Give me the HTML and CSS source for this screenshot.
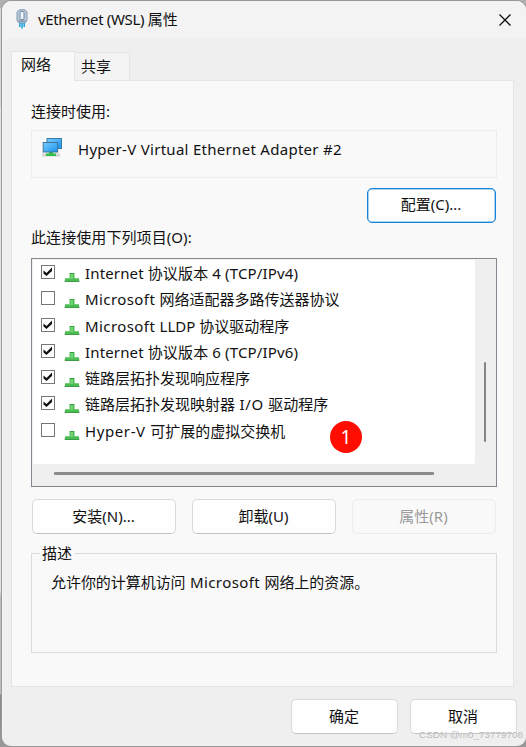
FILE: index.html
```html
<!DOCTYPE html>
<html lang="zh-CN">
<head>
<meta charset="utf-8">
<title>vEthernet (WSL) 属性</title>
<link rel="stylesheet" href="styles.css">
</head>
<body>
<svg class="defs" aria-hidden="true">
  <symbol id="proto" viewBox="0 0 16 12">
    <rect x="0" y="8" width="16" height="2" fill="#d5d5d5"/>
    <path d="M5.500 1h5v5.200H15V10H1V6.200h4.500z" fill="#4cbd52"/>
    <path d="M6 1h4v1H6zM1 9h14v1H1z" fill="#3a9c45"/>
    <path d="M6.500 2h2.500v5H3v-.5h3.500z" fill="#72d374"/>
  </symbol>
  <symbol id="tick" viewBox="0 0 12 12">
    <path d="M1.500 4.500l3 2.500L10 1.500V5L4.500 10l-3-2.500z" fill="#111"/>
  </symbol>
</svg>
<main class="dialog">
  <header class="titlebar">
    <svg class="plug" viewBox="0 0 12 20">
      <path d="M3 .8h6l2 2.200v8.500L9 14H3l-2-2.500V3z" fill="#b9c9da" stroke="#8399b1"/>
      <rect x="4" y="2.500" width="4" height="8" rx="1" fill="#eef5fb" stroke="#7187a0"/>
      <path d="M2.500 12h7" stroke="#667f9b"/>
      <path d="M3.800 14v4M6 14v5.500M8.200 14v4" stroke="#19a3dc" stroke-width="1.500"/>
    </svg>
    <h1 class="title"><span class="t-title">vEthernet (WSL) </span>属性</h1>
    <svg class="close" viewBox="0 0 12 12"><path d="M.5.5l11 11M11.500.5l-11 11" stroke="#111" stroke-width="1.250"/></svg>
  </header>
  <nav class="tabs">
    <div class="tab active">网络</div>
    <div class="tab">共享</div>
  </nav>
  <section class="panel">
    <div class="label">连接时使用:</div>
    <div class="device">
      <svg class="monitors" viewBox="0 0 20 20">
        <defs><linearGradient id="g" x1="0" y1="0" x2="1" y2="1"><stop offset="0" stop-color="#7ccbff"/><stop offset="1" stop-color="#1594ee"/></linearGradient></defs>
        <rect x="5" y="1.500" width="14.500" height="10" fill="url(#g)" stroke="#3a7ca8"/>
        <rect x="0" y="16.500" width="18" height="3" fill="#d4d4d4"/>
        <path d="M7 14h4v2.500h3V19H4v-2.500h3z" fill="#35bd4d"/>
        <rect x="1.200" y="5.500" width="14.500" height="9.500" fill="url(#g)" stroke="#3f7597"/>
      </svg>
      <span class="t-device">Hyper-V Virtual Ethernet Adapter #2</span>
    </div>
    <div class="config-row"><button class="btn primary">配置(C)...</button></div>
    <div class="label list-label">此连接使用下列项目(O):</div>
    <div class="listbox">
      <ul class="items">
        <li><i class="check"><svg><use href="#tick"/></svg></i><svg class="proto"><use href="#proto"/></svg><span class="loose-1">Internet 协议版本 4 (TCP/IPv4)</span></li>
        <li><i class="check"></i><svg class="proto"><use href="#proto"/></svg><span><b class="loose-2">Microsoft </b>网络适配器多路传送器协议</span></li>
        <li><i class="check"><svg><use href="#tick"/></svg></i><svg class="proto"><use href="#proto"/></svg><span><b class="loose-2">Microsoft </b>LLDP 协议驱动程序</span></li>
        <li><i class="check"><svg><use href="#tick"/></svg></i><svg class="proto"><use href="#proto"/></svg><span class="loose-1">Internet 协议版本 6 (TCP/IPv6)</span></li>
        <li><i class="check"><svg><use href="#tick"/></svg></i><svg class="proto"><use href="#proto"/></svg><span>链路层拓扑发现响应程序</span></li>
        <li><i class="check"><svg><use href="#tick"/></svg></i><svg class="proto"><use href="#proto"/></svg><span>链路层拓扑发现映射器<b class="loose-3"> I/O </b>驱动程序</span></li>
        <li><i class="check"></i><svg class="proto"><use href="#proto"/></svg><span><b class="loose-3">Hyper-V </b>可扩展的虚拟交换机</span></li>
      </ul>
      <div class="vscroll"><div class="vthumb"></div></div>
      <div class="hscroll"><div class="hthumb"></div></div>
      <div class="marker">1</div>
    </div>
    <div class="actions">
      <button class="btn">安装(N)...</button>
      <button class="btn">卸载(U)</button>
      <button class="btn disabled">属性(R)</button>
    </div>
    <div class="group">
      <div class="legend">描述</div>
      <p class="desc">允许你的计算机访问<b class="loose-2"> Microsoft </b>网络上的资源。</p>
    </div>
  </section>
  <footer class="footer">
    <button class="btn">确定</button>
    <button class="btn">取消</button>
  </footer>
</main>
<div class="watermark">CSDN @m0_73779708</div>
</body>
</html>
```
FILE: styles.css
```css
* { box-sizing: border-box; }
body {
  margin: 0;
  width: 526px;
  height: 747px;
  padding: 1px 0 1px 2px;
  overflow: hidden;
  position: relative;
  background: linear-gradient(#b0b0b0, #b0b0b0) 0 0 / 100% 8px no-repeat, linear-gradient(#d6d6d6 0 107px, #e4e4e4 107px 590px, #bdbdbd 597px 694px, #8b8b8b 695px 715px, #999 747px);
  font: 15px/20px "Noto Sans", "Noto Sans CJK SC", sans-serif;
  color: #111;
}
b { font-weight: 400; }
.defs { position: absolute; width: 0; height: 0; }
.dialog {
  width: 524px;
  height: 745px;
  background: #efefef;
  border-left: 1px solid #f4f4f4;
  border-radius: 9px;
  overflow: hidden;
  box-shadow: 0 0 0 1px #999;
}
.titlebar {
  height: 38px;
  padding: 0 15px 0 13px;
  display: flex;
  align-items: center;
  background: #f3f3f3;
}
.plug { width: 12px; height: 20px; margin-top: -2px; }
.title { margin: -2px auto 0 10px; font-size: 15px; font-weight: 400; white-space: pre; }
.t-title { letter-spacing: -.35px; }
.close { width: 12px; height: 12px; }
.tabs { display: flex; align-items: flex-end; height: 41px; padding: 12px 0 0 8px; }
.tab {
  width: 55px;
  height: 28px;
  padding: 3px 0 0 6px;
  border: 1px solid #e5e5e5;
  border-left: 0;
  border-bottom: 0;
  background: #f3f3f3;
}
.tab.active {
  position: relative;
  width: 64px;
  height: 30px;
  margin-bottom: -1px;
  padding: 2px 0 0 9px;
  border-left: 1px solid #e5e5e5;
  background: #f9f9f9;
}
.panel {
  width: 503px;
  height: 607px;
  margin-left: 8px;
  padding: 20px 16px 0 19px;
  border: 1px solid #e5e5e5;
  background: #f9f9f9;
}
.label { height: 20px; white-space: nowrap; }
.device {
  display: flex;
  height: 48px;
  margin-top: 9px;
  padding: 6px 0 0 10px;
  border: 1px solid #ededed;
}
.monitors { width: 20px; height: 20px; margin-right: 16px; }
.t-device { margin-top: 2px; letter-spacing: .29px; white-space: nowrap; }
.config-row { display: flex; justify-content: flex-end; margin: 10px 1px 4px 0; }
.btn {
  width: 144px;
  height: 35px;
  padding: 0 1px 2px 0;
  border: 1px solid #d9d9d9;
  border-bottom-color: #c4c4c4;
  border-radius: 5px;
  background: #fefefe;
  color: inherit;
  font: inherit;
  white-space: nowrap;
}
.btn.primary { width: 129px; padding-bottom: 4px; border: 1px solid #1583d8; box-shadow: inset 0 0 0 .5px #58a9e4; }
.btn.disabled { border-color: #ececec; background: #f9f9f9; color: #9b9b9b; }
.list-label { margin-top: 4px; letter-spacing: .08px; }
.listbox {
  position: relative;
  display: grid;
  grid-template-columns: 442px 1fr;
  grid-template-rows: 204px 1fr;
  height: 229px;
  margin-top: 11px;
  padding: 1px;
  border: 1px solid #828790;
  background: #efefef;
}
.items { margin: 0; padding: 0 0 0 8px; list-style: none; background: #fff; border-radius: 0 0 2px 0; }
.items li { display: flex; height: 26.300px; white-space: pre; }
.items span { margin-top: 3px; }
.items .loose-1 { letter-spacing: .14px; }
.loose-2 { letter-spacing: .42px; }
.loose-3 { letter-spacing: .6px; }
.check { width: 14px; height: 14px; margin: 5px 9px 0 0; border: 1px solid #777; background: #fff; }
.check svg { display: block; width: 12px; height: 12px; }
.proto { width: 16px; height: 12px; margin: 12px 5px 0 0; }
.vscroll { display: flex; justify-content: center; padding-top: 102px; }
.vthumb { width: 2px; height: 80px; border-radius: 1px; background: #858585; }
.hscroll { padding: 8px 0 0 21px; }
.hthumb { width: 380px; height: 3px; border-radius: 1px; background: #8b8b8b; }
.marker {
  position: absolute;
  left: 298px;
  top: 162px;
  width: 32px;
  height: 32px;
  border-radius: 50%;
  background: #ff0d00;
  color: #fff;
  font-size: 19px;
  line-height: 32px;
  text-align: center;
}
.actions { display: flex; gap: 16px; margin: 12px 0 0 1px; }
.group { height: 100px; margin-top: 19px; border: 1px solid #dcdcdc; }
.legend { width: 35px; height: 20px; margin: -11px 0 0 8px; padding-left: 2px; background: #f9f9f9; }
.desc { margin: 9px 0 0 19px; letter-spacing: -.05px; white-space: nowrap; }
.footer { display: flex; justify-content: flex-end; gap: 12px; padding: 12px 9px 0 0; }
.footer .btn { width: 107px; }
.watermark { position: absolute; right: 3px; bottom: 2px; color: #b5b5b5; font: 9.900px/20px "Liberation Sans", sans-serif; white-space: nowrap; text-shadow: 0 0 1px #fff; }
```
